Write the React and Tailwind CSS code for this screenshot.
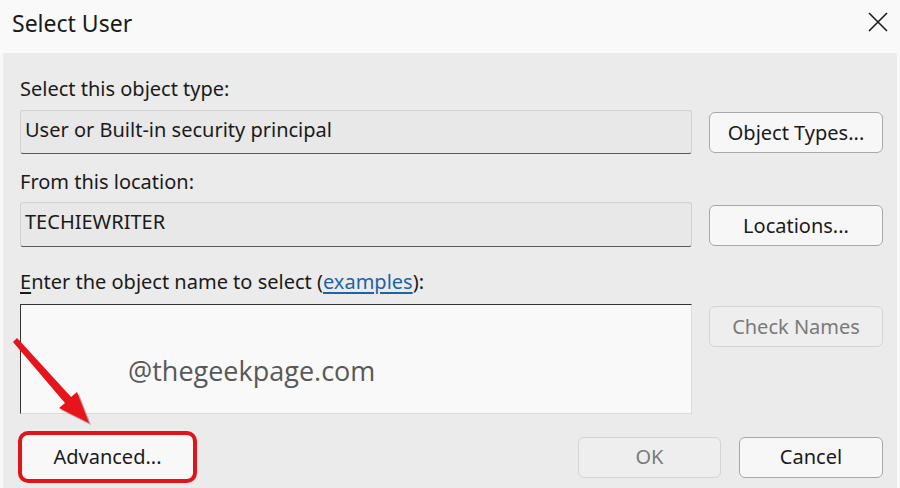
import React from 'react';

const ui = { fontFamily: '"Noto Sans", "Open Sans", sans-serif' };

function Field({ text, h }) {
  return (
    <div className={`w-[672px] ${h} bg-[#e8e8e8] border border-[#d2d2d2] border-b-[#5a5a5a] rounded-[3px] pl-[4px] pt-[6px] text-[20px] leading-[26px] text-[#1a1a1a]`}>
      {text}
    </div>
  );
}

function Btn({ children, disabled, className = '' }) {
  return (
    <div
      className={`h-[41px] rounded-[6px] border flex items-center justify-center text-[20px] ${
        disabled
          ? 'border-[#d4d4d4] bg-[#eeeeee] text-[#7a7a7a]'
          : 'border-[#a8a8a8] bg-[#f7f7f7] text-[#1a1a1a]'
      } ${className}`}
    >
      {children}
    </div>
  );
}

export default function App() {
  return (
    <div className="w-[900px] h-[488px] bg-[#f9f9f9] overflow-hidden relative" style={ui}>
      {/* Title bar */}
      <div className="h-[53px] flex items-center justify-between pl-[12px] pr-[12px]">
        <span className="text-[23px] text-[#1a1a1a] -mt-[6px]">Select User</span>
        <svg width="20" height="20" viewBox="0 0 20 20" className="-mt-[10px]">
          <path d="M1 1 L19 19 M19 1 L1 19" stroke="#1a1a1a" strokeWidth="1.6" />
        </svg>
      </div>

      {/* Body */}
      <div className="mx-[3px] h-[435px] bg-[#ebebeb] pl-[17px] pr-[14px] flex flex-col">
        <div className="mt-[24px] text-[20px] leading-[24px] text-[#1a1a1a]">Select this object type:</div>
        <div className="mt-[9px] flex gap-[17px] items-start">
          <Field text="User or Built-in security principal" h="h-[44px]" />
          <Btn className="w-[174px] mt-[2px]">Object Types...</Btn>
        </div>

        <div className="mt-[16px] text-[20px] leading-[24px] text-[#1a1a1a]">From this location:</div>
        <div className="mt-[8px] flex gap-[17px] items-start">
          <Field text="TECHIEWRITER" h="h-[45px]" />
          <Btn className="w-[174px] mt-[3px]">Locations...</Btn>
        </div>

        <div className="mt-[23px] text-[20px] leading-[24px] text-[#1a1a1a]">
          <span className="underline underline-offset-[3px]">E</span>nter the object name to select (
          <span className="text-[#1f62a8] underline underline-offset-[3px]">examples</span>):
        </div>
        <div className="mt-[10px] flex gap-[17px] items-start">
          <div className="w-[672px] h-[110px] bg-[#f9f9f9] border border-[#dcdcdc] border-t-[#333333] border-l-[#333333] flex items-center pl-[107px]">
            <span className="text-[27px] text-[#585858] mt-[24px]" style={{ fontFamily: '"Open Sans", sans-serif' }}>
              @thegeekpage.com
            </span>
          </div>
          <Btn disabled className="w-[174px] mt-[2px] h-[40px]">Check Names</Btn>
        </div>

        <div className="mt-[17px] flex items-center">
          <div className="-ml-[2px] w-[179px] h-[52px] rounded-[10px] border-[4px] border-[#e2141b] bg-[#f8f8f8] flex items-center justify-center text-[20px] text-[#1a1a1a]">
            Advanced...
          </div>
          <Btn disabled className="ml-auto w-[143px] h-[40px]">OK</Btn>
          <Btn className="ml-[18px] w-[144px]">Cancel</Btn>
        </div>
      </div>

      {/* Red arrow annotation */}
      <svg className="absolute left-0 top-0 pointer-events-none" width="900" height="488">
        <polygon
          points="17,338 71,397 77,392 89,423 59,408 65,403 13,342"
          fill="#7a0000"
          opacity="0.35"
          transform="translate(2,2)"
        />
        <polygon points="17,338 71,397 77,392 89,423 59,408 65,403 13,342" fill="#e8141c" />
      </svg>
    </div>
  );
}
